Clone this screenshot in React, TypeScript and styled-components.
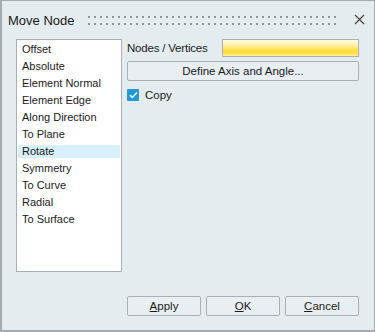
import React, { useState } from 'react';
import styled, { createGlobalStyle } from 'styled-components';

const GlobalStyle = createGlobalStyle`
  html, body {
    margin: 0;
    padding: 0;
    background: #e4ecef;
  }
  body {
    font-family: "Liberation Sans", Arial, sans-serif;
    font-size: 11px;
    color: #1a1a1a;
  }
`;

const Dialog = styled.div`
  box-sizing: border-box;
  width: 375px;
  height: 332px;
  background: #e4ecef;
  border: 1px solid #a3abb0;
  border-width: 1px 1px 2px 2px;
  display: flex;
  flex-direction: column;
`;

const TitleBar = styled.div`
  height: 37px;
  display: flex;
  align-items: center;
  padding: 0 8px 0 6px;
  gap: 10px;
`;

const Title = styled.div`
  font-size: 13px;
  color: #1a1a1a;
  white-space: nowrap;
  padding-top: 1px;
`;

const Grip = styled.div`
  flex: 1;
  height: 9px;
  margin: 1px 6px 0 4px;
  background-image: linear-gradient(90deg, #8d969b 2px, transparent 2px),
    linear-gradient(90deg, #8d969b 2px, transparent 2px);
  background-size: 6px 2px, 6px 2px;
  background-position: 0 0, 0 7px;
  background-repeat: repeat-x;
`;

const CloseButton = styled.button`
  width: 14px;
  height: 14px;
  padding: 0;
  border: none;
  background: transparent;
  display: flex;
  align-items: center;
  justify-content: center;
`;

const Body = styled.div`
  flex: 1;
  display: flex;
  gap: 5px;
  padding: 1px 15px 0 14px;
`;

const ListBox = styled.ul`
  box-sizing: border-box;
  width: 106px;
  height: 233px;
  margin: 0;
  padding: 3px 1px;
  list-style: none;
  background: #ffffff;
  border: 1px solid #a9b0b4;
`;

const ListItem = styled.li<{ $selected?: boolean }>`
  height: 13px;
  line-height: 13px;
  margin-bottom: 4px;
  padding-left: 4px;
  background: ${(p) => (p.$selected ? '#d8f0fb' : 'transparent')};
  white-space: nowrap;
  cursor: default;
`;

const Panel = styled.div`
  flex: 1;
  display: flex;
  flex-direction: column;
  gap: 4px;
`;

const FieldRow = styled.div`
  display: flex;
  align-items: center;
  height: 18px;
`;

const FieldLabel = styled.span`
  width: 95px;
  font-size: 11.5px;
  letter-spacing: -0.2px;
  white-space: nowrap;
`;

const YellowField = styled.div`
  box-sizing: border-box;
  flex: 1;
  height: 18px;
  border: 1px solid #a9b0b4;
  background: linear-gradient(#fffbe2 0%, #fff0a0 35%, #ffe14e 60%, #ffdc38 80%, #fff1a6 100%);
`;

const WideButton = styled.button`
  box-sizing: border-box;
  height: 20px;
  width: 100%;
  border: 1px solid #a9b0b4;
  border-radius: 2px;
  background: #e8eef1;
  font-family: inherit;
  font-size: 11.5px;
  color: #1a1a1a;
  padding: 0;
`;

const CheckRow = styled.label`
  display: flex;
  align-items: center;
  gap: 6px;
  height: 16px;
  margin-top: 2px;
  font-size: 11.5px;
`;

const CheckBox = styled.span`
  box-sizing: border-box;
  width: 12px;
  height: 12px;
  background: #1e9bd7;
  display: flex;
  align-items: center;
  justify-content: center;
  border-radius: 1px;
`;

const Footer = styled.div`
  display: flex;
  justify-content: flex-end;
  gap: 5px;
  padding: 0 15px 14px 0;
`;

const FooterButton = styled.button`
  box-sizing: border-box;
  width: 74px;
  height: 20px;
  border: 1px solid #a9b0b4;
  border-radius: 2px;
  background: #e8eef1;
  font-family: inherit;
  font-size: 11.5px;
  color: #1a1a1a;
  padding: 0;

  u {
    text-decoration: underline;
    text-underline-offset: 1px;
  }
`;

const methods = [
  'Offset',
  'Absolute',
  'Element Normal',
  'Element Edge',
  'Along Direction',
  'To Plane',
  'Rotate',
  'Symmetry',
  'To Curve',
  'Radial',
  'To Surface',
];

export default function App() {
  const [selected, setSelected] = useState('Rotate');

  return (
    <>
      <GlobalStyle />
      <Dialog>
        <TitleBar>
          <Title>Move Node</Title>
          <Grip />
          <CloseButton aria-label="Close">
            <svg width="11" height="11" viewBox="0 0 11 11">
              <path d="M1 1 L10 10 M10 1 L1 10" stroke="#444" strokeWidth="1.2" />
            </svg>
          </CloseButton>
        </TitleBar>
        <Body>
          <ListBox>
            {methods.map((m) => (
              <ListItem key={m} $selected={m === selected} onClick={() => setSelected(m)}>
                {m}
              </ListItem>
            ))}
          </ListBox>
          <Panel>
            <FieldRow>
              <FieldLabel>Nodes / Vertices</FieldLabel>
              <YellowField />
            </FieldRow>
            <WideButton>Define Axis and Angle...</WideButton>
            <CheckRow>
              <CheckBox>
                <svg width="9" height="8" viewBox="0 0 9 8">
                  <path d="M1 4.2 L3.4 6.4 L8 1.5" stroke="#fff" strokeWidth="1.5" fill="none" />
                </svg>
              </CheckBox>
              <span>Copy</span>
            </CheckRow>
          </Panel>
        </Body>
        <Footer>
          <FooterButton>
            <u>A</u>pply
          </FooterButton>
          <FooterButton>
            <u>O</u>K
          </FooterButton>
          <FooterButton>
            <u>C</u>ancel
          </FooterButton>
        </Footer>
      </Dialog>
    </>
  );
}
